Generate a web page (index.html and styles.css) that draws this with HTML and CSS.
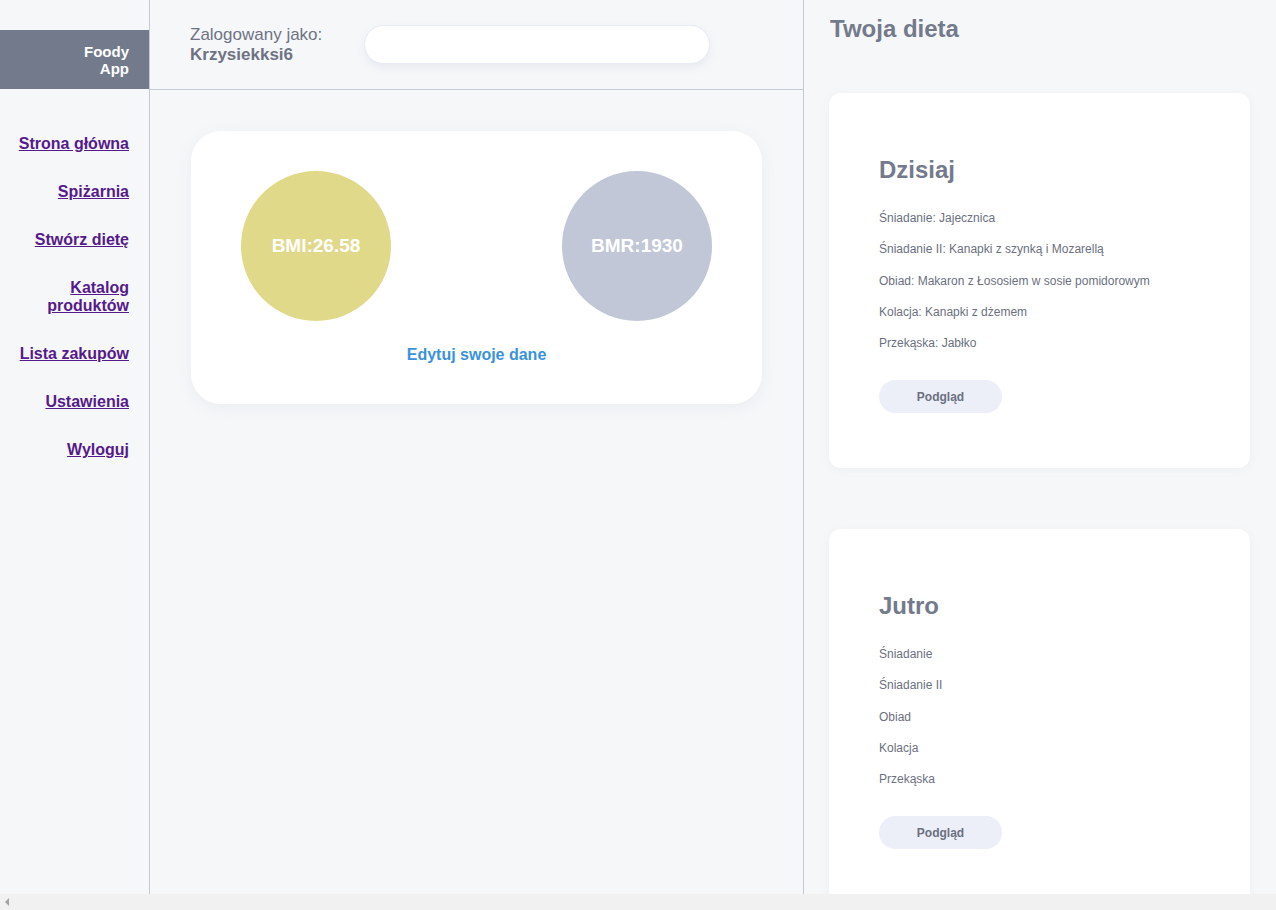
FILE: index.html
```html
<!DOCTYPE html>
<html lang="pl">
<head>
<meta charset="utf-8">
<title>Foody App</title>
<link rel="stylesheet" href="styles.css">
</head>
<body>
<div class="app">
  <aside class="sidebar">
    <div class="logo"><span class="logo-text">Foody App</span></div>
    <nav class="nav">
      <a href="#">Strona główna</a>
      <a href="#">Spiżarnia</a>
      <a href="#">Stwórz dietę</a>
      <a href="#">Katalog produktów</a>
      <a href="#">Lista zakupów</a>
      <a href="#">Ustawienia</a>
      <a href="#">Wyloguj</a>
    </nav>
  </aside>
  <main class="main">
    <header class="topbar">
      <div class="user">
        <span class="user-label">Zalogowany jako:</span>
        <span class="user-name">Krzysiekksi6</span>
      </div>
      <input class="search" type="text">
    </header>
    <section class="content">
      <div class="stats-card">
        <div class="circles">
          <div class="circle circle-bmi">BMI:26.58</div>
          <div class="circle circle-bmr">BMR:1930</div>
        </div>
        <a class="edit-link" href="#">Edytuj swoje dane</a>
      </div>
    </section>
  </main>
  <aside class="diet">
    <h1 class="diet-title">Twoja dieta</h1>
    <div class="day-card">
      <h2 class="day-title">Dzisiaj</h2>
      <ul class="meals">
        <li>Śniadanie: Jajecznica</li>
        <li>Śniadanie II: Kanapki z szynką i Mozarellą</li>
        <li>Obiad: Makaron z Łososiem w sosie pomidorowym</li>
        <li>Kolacja: Kanapki z dżemem</li>
        <li>Przekąska: Jabłko</li>
      </ul>
      <button class="preview-btn">Podgląd</button>
    </div>
    <div class="day-card day-card-next">
      <h2 class="day-title">Jutro</h2>
      <ul class="meals">
        <li>Śniadanie</li>
        <li>Śniadanie II</li>
        <li>Obiad</li>
        <li>Kolacja</li>
        <li>Przekąska</li>
      </ul>
      <button class="preview-btn">Podgląd</button>
    </div>
  </aside>
</div>
<div class="hscroll" aria-hidden="true"><span class="hscroll-arrow"></span></div>
</body>
</html>
```

FILE: styles.css
```css
html,
body {
  overflow: hidden;
}

body {
  margin: 0;
  background: #f6f7f9;
  font-family: "Liberation Sans", Arial, sans-serif;
  color: #6b7080;
}

.app {
  display: flex;
  height: 100vh;
  width: 1294px;
}

/* Horizontal scrollbar strip */
.hscroll {
  position: fixed;
  left: 0;
  right: 0;
  bottom: 0;
  height: 16px;
  background: #f1f1f1;
  display: flex;
  align-items: center;
  padding-left: 5px;
}

.hscroll-arrow {
  width: 0;
  height: 0;
  border-top: 4px solid transparent;
  border-bottom: 4px solid transparent;
  border-right: 4px solid #a3a3a3;
}

/* Sidebar */
.sidebar {
  flex: 0 0 149px;
  border-right: 1px solid #c4c9d6;
  background: #f6f7f9;
}

.logo {
  margin-top: 30px;
  height: 59px;
  background: #737a8c;
  display: flex;
  align-items: center;
  justify-content: flex-end;
  padding-right: 20px;
  box-sizing: border-box;
}

.logo-text {
  display: inline-block;
  width: 50px;
  text-align: right;
  color: #ffffff;
  font-weight: bold;
  font-size: 15px;
  line-height: 17px;
}

.nav {
  display: flex;
  flex-direction: column;
  align-items: flex-end;
  gap: 30px;
  padding: 46px 20px 0 10px;
}

.nav a {
  color: #551a8b;
  font-weight: bold;
  font-size: 16px;
  line-height: 18px;
  text-align: right;
  text-decoration: underline;
}

/* Main column */
.main {
  flex: 0 0 653px;
  border-right: 1px solid #c4c9d6;
  display: flex;
  flex-direction: column;
}

.topbar {
  height: 89px;
  border-bottom: 1px solid #c4c9d6;
  display: flex;
  align-items: center;
  gap: 42px;
  padding-left: 40px;
}

.user {
  display: flex;
  flex-direction: column;
  font-size: 17px;
  line-height: 20px;
  color: #6e7384;
}

.user-name {
  font-weight: bold;
}

.search {
  width: 346px;
  height: 39px;
  box-sizing: border-box;
  border: 1px solid #e8eaf4;
  border-radius: 20px;
  background: #ffffff;
  box-shadow: 0 4px 10px rgba(120, 130, 170, 0.10);
  outline: none;
  font-family: inherit;
}

.content {
  padding: 41px;
}

.stats-card {
  background: #ffffff;
  border-radius: 30px;
  padding: 40px 50px 40px;
  box-shadow: 0 4px 16px rgba(100, 110, 140, 0.08);
  display: flex;
  flex-direction: column;
  align-items: center;
}

.circles {
  align-self: stretch;
  display: flex;
  justify-content: space-between;
}

.circle {
  width: 150px;
  height: 150px;
  border-radius: 50%;
  display: flex;
  align-items: center;
  justify-content: center;
  color: #ffffff;
  font-weight: bold;
  font-size: 19px;
}

.circle-bmi {
  background: #e1d98a;
}

.circle-bmr {
  background: #c1c7d6;
}

.edit-link {
  margin-top: 24px;
  color: #3a92dc;
  font-weight: bold;
  font-size: 16px;
  line-height: 19px;
  text-decoration: none;
}

/* Diet column */
.diet {
  flex: 0 0 490px;
  padding-left: 26px;
  box-sizing: border-box;
  overflow: hidden;
}

.diet-title {
  margin: 15px 0 0;
  font-size: 24px;
  line-height: 27px;
  color: #737a8c;
}

.day-card {
  width: 421px;
  box-sizing: border-box;
  margin-top: 51px;
  margin-left: -1px;
  background: #ffffff;
  border-radius: 12px;
  padding: 63px 50px 55px;
  box-shadow: 0 2px 10px rgba(100, 110, 140, 0.06);
}

.day-card-next {
  margin-top: 61px;
}

.day-title {
  margin: 0;
  font-size: 24px;
  line-height: 28px;
  color: #737a8c;
}

.meals {
  list-style: none;
  margin: 27px 0 0;
  padding: 0;
  display: flex;
  flex-direction: column;
  gap: 17.25px;
}

.meals li {
  font-size: 12px;
  line-height: 14px;
  color: #6b7080;
}

.preview-btn {
  margin-top: 30px;
  width: 123px;
  height: 33px;
  border: none;
  border-radius: 17px;
  background: #eceef8;
  color: #6b7080;
  font-family: inherit;
  font-weight: bold;
  font-size: 12px;
  cursor: pointer;
}
```
